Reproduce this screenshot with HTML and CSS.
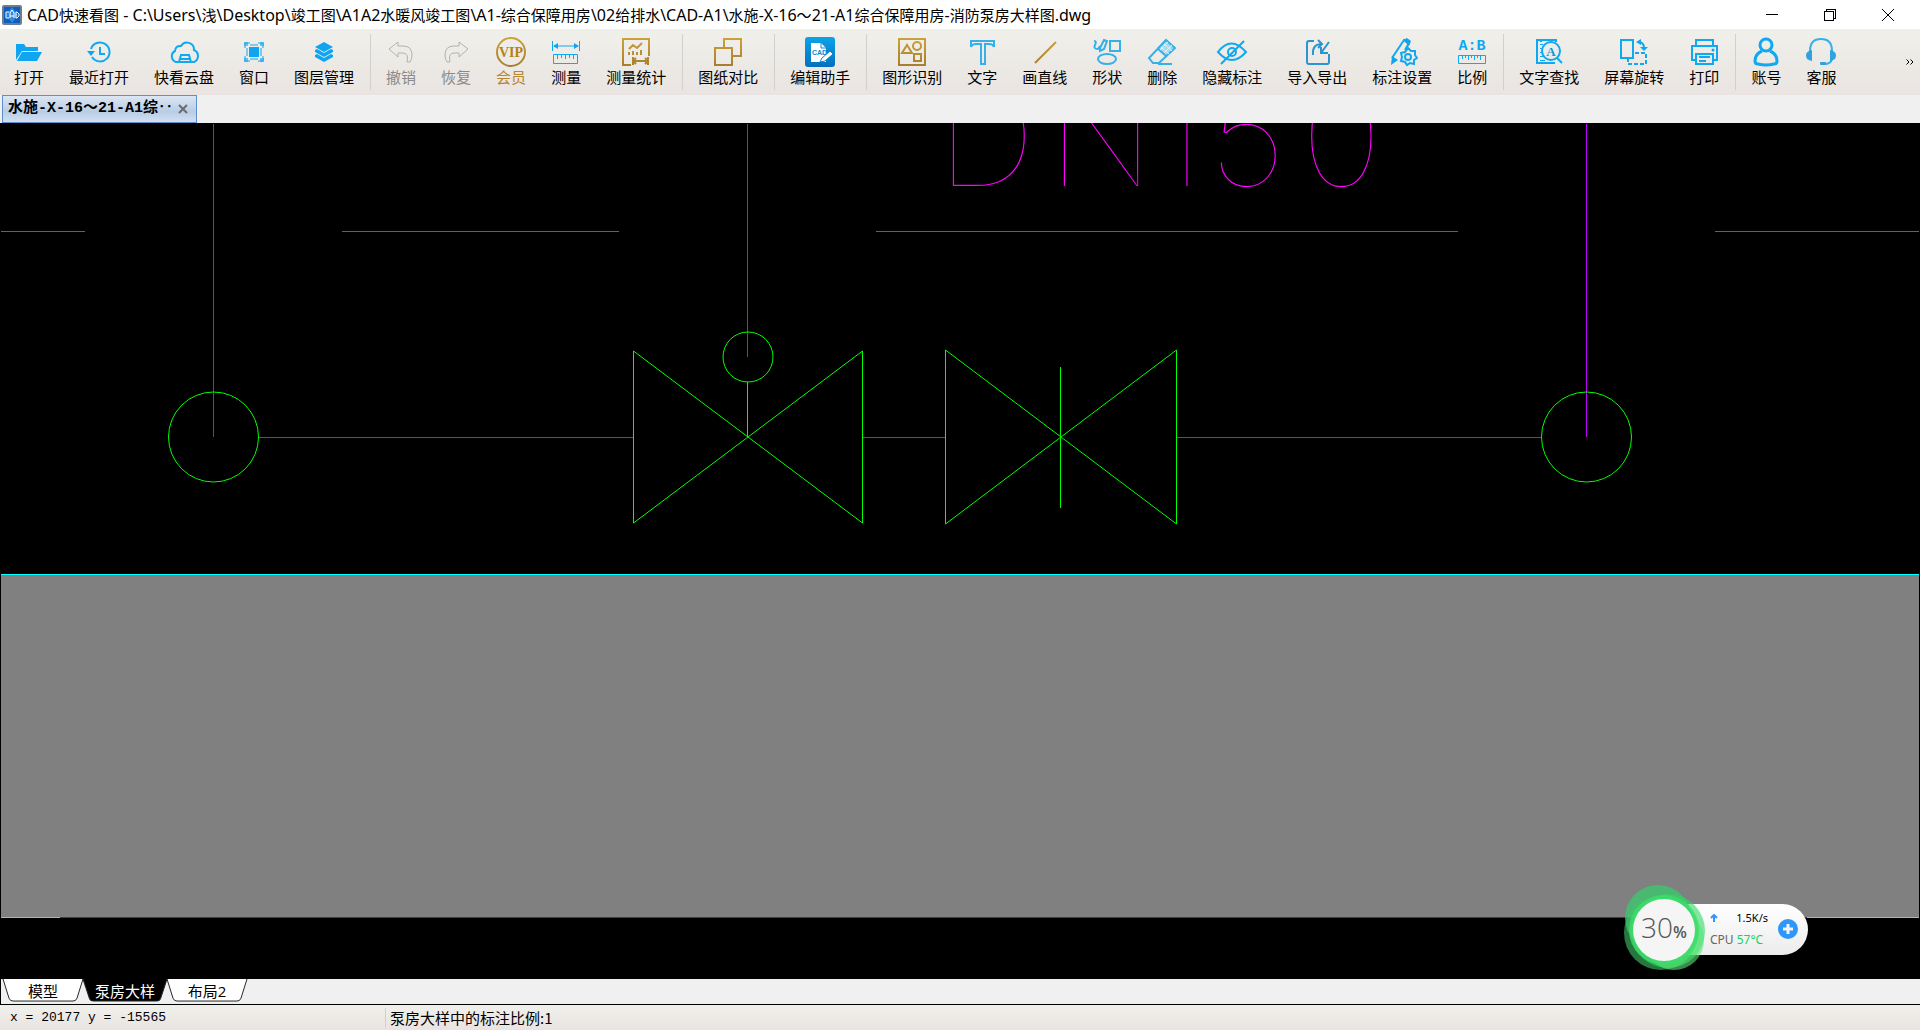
FILE: index.html
```html
<!DOCTYPE html>
<html lang="zh-CN">
<head>
<meta charset="utf-8">
<title>CAD快速看图</title>
<link rel="stylesheet" href="styles.css">
</head>
<body>
<div class="app">
  <header class="titlebar">
    <svg class="app-icon" viewBox="0 0 20 20"><rect x="1" y="1" width="18" height="18" rx="1" fill="#0b5fc0" stroke="#6d7c90" stroke-width="2"/><path d="M10 2l6 8-6 8-6-8z" fill="#2f8be0"/><path d="M7 7H4v6h3M8 13V8l2-3 2 3v5M8 11h4M14 7h1l2 2v2l-2 2h-1z" fill="none" stroke="#fff" stroke-width="1"/></svg>
    <h1 class="title">CAD<span>快速看图</span> - C:\Users\<span>浅</span>\Desktop\<span>竣工图</span>\A1A2<span>水暖风竣工图</span>\A1-<span>综合保障用房</span>\02<span>给排水</span>\CAD-A1\<span>水施</span>-X-16<span>～</span>21-A1<span>综合保障用房</span>-<span>消防泵房大样图</span>.dwg</h1>
    <div class="window-controls">
      <button aria-label="最小化"><svg viewBox="0 0 12 12"><path d="M0 5.500h12"/></svg></button>
      <button aria-label="还原"><svg viewBox="0 0 12 12"><path d="M.5 2.500h9v9h-9zM2.500 2.500v-2h9v9h-2"/></svg></button>
      <button aria-label="关闭"><svg viewBox="0 0 12 12" class="smooth"><path d="M0 0l12 12M12 0L0 12"/></svg></button>
    </div>
  </header>

  <nav class="toolbar" aria-label="工具栏">
    <button class="tool"><svg viewBox="0 0 32 32"><path class="fb" d="M3 24V8h8l2 3h12v4H9z"/><path class="fb" d="M9 16h20l-5 9H4z"/></svg><span>打开</span></button>
    <button class="tool"><svg viewBox="0 0 32 32"><path class="b w2" d="M8 13a9.500 9.500 0 1 1 1 8M17 11v7h5"/><path class="fb" d="M4 15h8l-4 5z"/></svg><span>最近打开</span></button>
    <button class="tool"><svg viewBox="0 0 32 32"><path class="b w2" d="M10 26H8a6 6 0 0 1-1-11a5 5 0 0 1 6-5a7 7 0 0 1 13 4a6.500 6.500 0 0 1 0 12h-2M11 26l2-7h8l2 7zM11 23h12"/></svg><span>快看云盘</span></button>
    <button class="tool"><svg viewBox="0 0 32 32"><rect class="fb" x="11" y="11" width="10" height="10"/><path class="b" d="M7 12V7h5M20 7h5v5M25 20v5h-5M12 25H7v-5M12 9h8M23 12v8M12 23h8M9 12v8"/><path class="fb" d="M6 6h4v4H6zM22 6h4v4h-4zM6 22h4v4H6zM22 22h4v4h-4z" opacity=".6"/></svg><span>窗口</span></button>
    <button class="tool"><svg viewBox="0 0 32 32"><path class="fb" d="M16 6l9 5-9 5-9-5zM7 14l2-1 7 4 7-4 2 1v2l-9 5-9-5zM7 19l2-1 7 4 7-4 2 1v2l-9 5-9-5z"/></svg><span>图层管理</span></button>
    <i class="sep"></i>
    <button class="tool" disabled><svg viewBox="0 0 32 32"><path class="g" d="M4 13l9-7v4h5q9 0 9 9 0 4-2 7h-3q2-9-4-9h-5v4z"/></svg><span>撤销</span></button>
    <button class="tool" disabled><svg viewBox="0 0 32 32"><path class="g" d="M28 13l-9-7v4h-5q-9 0-9 9 0 4 2 7h3q-2-9 4-9h5v4z"/></svg><span>恢复</span></button>
    <button class="tool vip"><svg viewBox="0 0 32 32"><circle class="o w2" cx="16" cy="16" r="14"/><text x="16" y="21" text-anchor="middle">VIP</text></svg><span>会员</span></button>
    <button class="tool"><svg viewBox="0 0 32 32"><path class="b" d="M2.500 5v10M29.500 5v10M4 10h24"/><path class="fb" d="M3 10l5-3v6zM29 10l-5-3v6z"/><path class="b" d="M3.500 18.500h24v9h-24zM7.500 19v4M11.500 19v3M15.500 19v4M19.500 19v3M23.500 19v4"/></svg><span>测量</span></button>
    <button class="tool"><svg viewBox="0 0 32 32"><path class="o w2" d="M11 29H3V3h26v17M9 13l4-4 4 3 5-5M13 25h15M13 21v8M28 21v8M16 22l-3 3 3 3M25 22l3 3-3 3"/><path class="o w2" d="M9 19v-3M13 19v-4M17 19v-3M21 19v-5"/></svg><span>测量统计</span></button>
    <i class="sep"></i>
    <button class="tool"><svg viewBox="0 0 32 32"><path class="o w2" d="M12 12V3h17v17h-9M3 12h17v17H3z"/></svg><span>图纸对比</span></button>
    <i class="sep"></i>
    <button class="tool"><svg viewBox="0 0 32 32"><rect x="1" y="1" width="30" height="30" rx="3" fill="url(#helper)"/><path d="M7 7h10l5 5v14H7z" fill="#fff"/><path d="M17 7v5h5" fill="none" stroke="#0a8fd6"/><text class="cad" x="8" y="19">CAD</text><path d="M16 26l2-4 8-7 3 3-8 7z" fill="#fff" stroke="#0a86cf"/></svg><span>编辑助手</span></button>
    <i class="sep"></i>
    <button class="tool"><svg viewBox="0 0 32 32"><path class="o w2" d="M3 3h26v26H3zM6 17l5-8 5 8zM18 18h7v7h-7z"/><circle class="o w2" cx="21" cy="10" r="4"/></svg><span>图形识别</span></button>
    <button class="tool"><svg viewBox="0 0 32 32"><path class="s w2" d="M5 11V5h23v6q-1-3-5-3h-4v20h-4V8h-5q-4 0-5 3z"/></svg><span>文字</span></button>
    <button class="tool"><svg viewBox="0 0 32 32"><path class="o w2" d="M6 27L27 6"/></svg><span>画直线</span></button>
    <button class="tool"><svg viewBox="0 0 32 32"><path class="s w2" d="M3 5q3 0 1 4t3 4l2-3M9 12l4-8 3 1-3 8-4 2zM19 5h10v10H19z"/><ellipse class="s w2" cx="16" cy="23" rx="9" ry="5"/></svg><span>形状</span></button>
    <button class="tool"><svg viewBox="0 0 32 32"><path d="M19 4l9 8-8 8-9-8z" fill="#9edbf5"/><path class="s w2" d="M20 4l9 8-16 15H7l-4-5zM11 12l9 8M12 28h14"/><path d="M15 11l8 7M18 8l8 7M18 17l8-8M14 14l8-8" stroke="#edebe8" stroke-width="1"/></svg><span>删除</span></button>
    <button class="tool"><svg viewBox="0 0 32 32"><path class="b w2" d="M2 16q13-17 28 0-14 16-28 0zM5 28L28 5"/><circle class="b w2" cx="16" cy="16" r="4"/></svg><span>隐藏标注</span></button>
    <button class="tool"><svg viewBox="0 0 32 32"><path class="n w2" d="M13 5H8q-2 0-2 2v19q0 2 2 2h18q2 0 2-2v-8M12 19q-1-11 9-11M17 4l4 4-4 4M28 6l-8 11M20 11v6h7"/></svg><span>导入导出</span></button>
    <button class="tool"><svg viewBox="0 0 32 32"><path class="b w2" d="M6 22L18 4l5 3-4 7"/><path class="fb" d="M17 4l4-2 4 3-2 5zM5 29l1-9 6 4z"/><path class="b w2" d="M22 12l3 3 4 0 0 4 2 3-3 2 0 4-4-1-3 2-2-3-4-1 1-4-1-4 4-1z"/><circle class="b w2" cx="22" cy="21" r="3"/></svg><span>标注设置</span></button>
    <button class="tool"><svg viewBox="0 0 32 32"><path class="b" d="M2.500 19.500h27v8h-27zM6.500 20v3M9.500 20v2M12.500 20v4M15.500 20v2M18.500 20v4M21.500 20v2M24.500 20v4"/><text class="ratio" x="16" y="14" text-anchor="middle">A:B</text></svg><span>比例</span></button>
    <i class="sep"></i>
    <button class="tool"><svg viewBox="0 0 32 32"><path class="b w2" d="M23 6V4H4v23h18M8 4v2M24 22l5 5"/><path class="b" d="M7 8.500h3M7 12.500h2M7 16.500h2M7 20.500h3M7 24.500h5"/><circle class="b w2" cx="18" cy="15" r="9"/><text class="find" x="18" y="20" text-anchor="middle">A</text></svg><span>文字查找</span></button>
    <button class="tool"><svg viewBox="0 0 32 32"><path class="b w2" d="M3 4h12v18H3z"/><path class="b w2" stroke-dasharray="4 2" d="M17 17h11v11H10v-5"/><path class="b w2" d="M20 6q6 0 6 6"/><path class="fb" d="M18 6l5-3v6zM22 11h8l-4 4z"/></svg><span>屏幕旋转</span></button>
    <button class="tool"><svg viewBox="0 0 32 32"><path class="b w2" d="M8 9V4h17v5M7 24H4V10h25v14h-3M8 18h17v10H8zM11 21h11M11 25h7"/><circle class="fb" cx="25" cy="14" r="1.500"/></svg><span>打印</span></button>
    <i class="sep"></i>
    <button class="tool"><svg viewBox="0 0 32 32"><circle class="b w3" cx="16" cy="9" r="6"/><path class="b w3" d="M12 15q-7 3-7 10 0 3 3 3 8 2 16 0 3 0 3-3 0-7-7-10"/></svg><span>账号</span></button>
    <button class="tool"><svg viewBox="0 0 32 32"><path class="s w2" d="M5 15q0-12 11-12t11 12M27 23q-1 5-8 5"/><path d="M7 14v11q-6-1-6-5.500T7 14zM25 14v11q6-1 6-5.500T25 14z" fill="#2ea3dd"/><rect x="15" y="26" width="6" height="3" rx="1" fill="#2ea3dd"/></svg><span>客服</span></button>
    <button class="more" aria-label="更多"><svg viewBox="0 0 8 6"><path d="M.5.500L3 3 .5 5.500M4.500.500L7 3 4.500 5.500"/></svg></button>
    <svg class="defs" aria-hidden="true"><defs>
      <linearGradient id="gold" x1="0" y1="0" x2="0" y2="32" gradientUnits="userSpaceOnUse"><stop offset="0" stop-color="#d0a43c"/><stop offset="1" stop-color="#a47c2c"/></linearGradient>
      <linearGradient id="helper" x1="0" y1="0" x2="0" y2="1"><stop offset="0" stop-color="#0aa4e8"/><stop offset="1" stop-color="#0470bd"/></linearGradient>
    </defs></svg>
  </nav>

  <div class="file-tabs">
    <div class="file-tab">
      <span class="file-name">水施-X-16～21-A1综‥</span>
      <button class="file-close" aria-label="关闭标签"><svg viewBox="0 0 10 10"><path d="M1 1l8 8M9 1L1 9"/></svg></button>
    </div>
  </div>

  <main class="canvas">
    <svg class="drawing" viewBox="0 123 1920 856" preserveAspectRatio="xMinYMin slice">
      <rect x="1" y="574" width="1918" height="344" fill="#808080"/>
      <g class="cyan"><path d="M1 574.500H1919"/><path class="edge" d="M1 917.500H1919"/><path d="M1 917.500H60M1807 917.500H1919"/></g>
      <path class="dash" d="M1 231.500H85M342 231.500H619M876 231.500H1458M1715 231.500H1919"/>
      <g class="pipe"><path d="M213.500 124V437M747.500 124V357M1586.500 124V437M258 437.500H633M863 437.500H945M1177 437.500H1541"/></g>
      <g class="valve">
        <circle cx="213.500" cy="437" r="45"/><circle cx="1586.500" cy="437" r="45"/><circle cx="748" cy="357" r="25"/>
        <path d="M633.500 351V523L862.500 351V523zM747.500 382V437M945.500 350V524L1176.500 350V524zM1060.500 367V508"/>
      </g>
      <text class="pipe-size" x="936 1047 1153 1208 1300" y="187">DN150</text>
    </svg>
    <aside class="monitor">
      <div class="monitor-pill">
        <div class="stats">
          <svg class="up" viewBox="0 0 8 8"><path d="M4 8V1M1 4l3-3 3 3"/></svg><span class="speed">1.5K/s</span>
          <span class="cpu">CPU <b>57°C</b></span>
        </div>
        <button class="plus" aria-label="加速"><svg viewBox="0 0 20 20"><circle cx="10" cy="10" r="10" fill="#2f96fb"/><path d="M10 5v10M5 10h10" stroke="#f4f4f4" stroke-width="3"/></svg></button>
      </div>
      <div class="gauge">
        <svg viewBox="0 0 82 87"><circle cx="35" cy="34" r="33" fill="#38cb6c" opacity=".75"/><circle cx="38" cy="49" r="37" fill="#40c868" opacity=".6"/><circle cx="45" cy="47" r="37" fill="#2fd864" opacity=".6"/><circle cx="51" cy="56" r="30" fill="#58e878" opacity=".6"/><circle cx="41" cy="46" r="35" fill="#3ddc6a" opacity=".8"/><circle cx="41" cy="46" r="31" fill="#f5f5f5"/></svg>
        <p class="percent">30<small>%</small></p>
      </div>
    </aside>
  </main>

  <nav class="layouts" aria-label="布局">
    <button class="layout"><svg viewBox="0 0 82 24" preserveAspectRatio="none"><path d="M1 0l6 20q1 3 4 3h60q3 0 4-3l6-20"/></svg><span>模型</span></button>
    <button class="layout active"><svg viewBox="0 0 82 24" preserveAspectRatio="none"><path d="M1 0l6 20q1 3 4 3h60q3 0 4-3l6-20"/></svg><span>泵房大样</span></button>
    <button class="layout"><svg viewBox="0 0 82 24" preserveAspectRatio="none"><path d="M1 0l6 20q1 3 4 3h60q3 0 4-3l6-20"/></svg><span>布局2</span></button>
  </nav>

  <footer class="status">
    <output class="coords">x = 20177 y = -15565</output>
    <span class="scale">泵房大样中的标注比例:1</span>
  </footer>
</div>
</body>
</html>
```
FILE: styles.css
```css
* { box-sizing: border-box; }
body { margin: 0; font: 15px/20px "Noto Sans", "Noto Sans CJK SC", sans-serif; color: #000; }
button { border: 0; padding: 0; margin: 0; background: none; font: inherit; color: inherit; }
svg { display: block; }
.app { display: flex; flex-direction: column; height: 100vh; overflow: hidden; background: #f0f0f0; }

.titlebar { display: flex; align-items: center; height: 29px; padding-left: 2px; background: #fff; }
.app-icon { width: 20px; height: 20px; margin-right: 5px; }
.title { flex: 1; margin: 0; font-size: 16px; font-weight: 400; white-space: nowrap; overflow: hidden; }
.title span { font-size: 15px; }
.window-controls { display: flex; padding-right: 3px; }
.window-controls button { display: grid; place-items: center; width: 58px; height: 29px; }
.window-controls svg { width: 12px; height: 12px; fill: none; stroke: #000; shape-rendering: crispEdges; }
.window-controls .smooth { shape-rendering: auto; }

.toolbar { display: flex; align-items: stretch; gap: 1px; height: 66px; padding-left: 2px; background: linear-gradient(#f0f0eb, #e9e4e1); }
.tool { display: flex; flex-direction: column; align-items: center; padding: 7px 12px 0; white-space: nowrap; font-family: "Noto Sans CJK SC", sans-serif; line-height: 18px; }
.tool svg { width: 32px; height: 32px; margin: 0 -1px; }
.tool:disabled { color: #8c8a88; }
.vip { color: #b8862c; }
.sep { flex: none; width: 6px; margin: 5px 0; background: linear-gradient(#d0d0ce, #d0d0ce) center / 1px 100% no-repeat; }
.more { margin-left: auto; padding-right: 5px; }
.more svg { width: 8px; height: 6px; fill: none; stroke: #000; stroke-width: 1; }
.defs { width: 0; height: 0; }
.b, .s, .n, .o, .g { fill: none; stroke-width: 1; }
.b { stroke: #0fa9f2; }
.s { stroke: #35b0e8; }
.n { stroke: #2c95cf; }
.o { stroke: url(#gold); }
.g { stroke: #b4b2b0; }
.fb { fill: #0fa5f0; }
.w2 { stroke-width: 2; }
.w3 { stroke-width: 3; }
.vip text { font: bold 14px "Liberation Serif", serif; fill: #b58213; }
.cad { font: bold 7px "Liberation Sans", sans-serif; fill: #0a86cf; }
.ratio { font: bold 15px "Liberation Mono", monospace; fill: #0fa9f2; }
.find { font: bold 13px "Liberation Serif", serif; fill: #0f97dd; }

.file-tabs { display: flex; height: 28px; padding-left: 2px; }
.file-tab { display: flex; align-items: center; gap: 5px; padding: 0 8px 0 5px; border: 1px solid #5f8fcb; background: linear-gradient(#dce6f3, #b9cde6 60%, #d3dfef); }
.file-name { font: bold 15px/20px "Liberation Mono", "Noto Sans CJK SC", monospace; white-space: nowrap; }
.file-close svg { width: 10px; height: 10px; fill: none; stroke: #6c6c6c; stroke-width: 2; }

.canvas { position: relative; flex: 1; min-height: 0; background: #000; }
.drawing { width: 100%; height: 100%; }
.drawing path, .drawing circle { fill: none; stroke-width: 1; }
.cyan { stroke: #00ffff; }
.cyan .edge { stroke: #404040; }
.dash { stroke: #ff00bf; }
.pipe { stroke: #bf00ff; }
.valve { stroke: #00ff00; }
.pipe-size { font: 100 140px "Inter", sans-serif; fill: #ff00ff; stroke: #000; stroke-width: 2px; }

.monitor { position: absolute; right: 112px; bottom: 8px; width: 185px; height: 87px; }
.monitor-pill { position: absolute; inset: 20px 0 16px 41px; display: flex; align-items: center; padding: 0 10px 2px 46px; border-radius: 26px; background: linear-gradient(#fff, #ececec); font: 13px/20px "Noto Sans", sans-serif; }
.stats { display: grid; grid-template-columns: 10px 1fr; align-items: center; row-gap: 2px; width: 58px; }
.up { width: 8px; height: 8px; fill: none; stroke: #2f96fb; stroke-width: 2; }
.speed { text-align: right; font-size: 11px; }
.cpu { grid-column: 1 / 3; color: #666; white-space: nowrap; font-size: 12px; }
.cpu b { font-weight: 400; color: #14d45c; }
.plus { margin-left: auto; }
.plus svg { width: 20px; height: 20px; }
.gauge { position: absolute; left: 0; top: 0; width: 82px; height: 87px; }
.percent { position: absolute; inset: 25px 0 auto; margin: 0; text-align: center; font: 300 28px/36px "Open Sans", sans-serif; color: #555; }
.percent small { font-size: 16px; font-weight: 600; }

.layouts { display: flex; height: 26px; padding: 0 0 2px 1px; border-left: 1px solid #000; border-bottom: 1px solid #000; }
.layout { position: relative; min-width: 82px; padding: 0 13px; font-family: "Open Sans", "Noto Sans CJK SC", sans-serif; }
.layout + .layout { margin-left: -2px; }
.layout svg { position: absolute; inset: 0; width: 100%; height: 100%; fill: #fff; stroke: #222; }
.layout span { position: relative; }
.active { z-index: 1; color: #fff; }
.active svg { fill: #000; }

.status { display: flex; align-items: center; height: 25px; background: linear-gradient(#f0f0eb, #e9e4e1); }
.coords { width: 385px; padding-left: 10px; font: 13px/20px "Liberation Mono", monospace; }
.scale { padding-left: 4px; border-left: 1px solid #d0d0ce; font-family: "Noto Sans CJK SC", sans-serif; }
```
